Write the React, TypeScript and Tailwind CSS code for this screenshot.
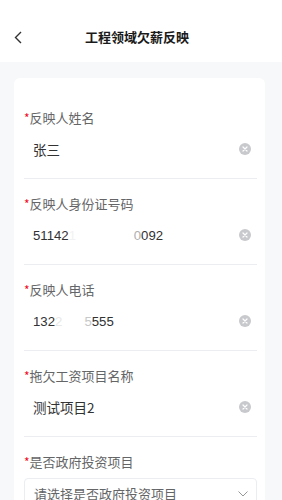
import React from "react";

const ClearIcon = () => (
  <svg width="12" height="12" viewBox="0 0 12 12" className="shrink-0">
    <circle cx="6" cy="6" r="6" fill="#c8c9cc" />
    <path d="M4 4 L8 8 M8 4 L4 8" stroke="#fff" strokeWidth="1.2" strokeLinecap="round" />
  </svg>
);

const Field = ({ label, children }: { label: string; children: React.ReactNode }) => (
  <div className="pt-[15px]">
    <div className="h-[20px] flex items-center text-[13px] text-[#646566] leading-[20px]">
      <span className="text-[#ee0a24] text-[12px]">*</span>
      <span>{label}</span>
    </div>
    <div className="h-[42px] flex items-center pl-[9px] pr-[6px] mb-[8px]">
      <div className="flex-1 text-[13.5px] text-[#323233] whitespace-nowrap">{children}</div>
      <ClearIcon />
    </div>
    <div className="h-px bg-[#ebedf0]" />
  </div>
);

export default function App() {
  return (
    <div
      className="w-[282px] h-[500px] overflow-hidden bg-[#f7f8fa]"
      style={{ fontFamily: '"Noto Sans CJK SC", "Noto Sans", sans-serif' }}
    >
      <div className="h-[62px] bg-white flex items-center pt-[12px] px-[14px]">
        <svg width="8" height="13" viewBox="0 0 8 13" className="shrink-0">
          <path d="M7 1 L1.5 6.5 L7 12" fill="none" stroke="#323233" strokeWidth="1.4" />
        </svg>
        <div className="ml-[63px] text-[13px] font-bold text-[#1a1a1a]">工程领域欠薪反映</div>
      </div>
      <div className="pl-[14px] pr-[17px] pt-[16px]">
        <div className="bg-white rounded-[6px] pl-[10px] pr-[8px] pt-[15px] pb-[20px]">
          <Field label="反映人姓名">张三</Field>
          <Field label="反映人身份证号码">
            <span className="text-[13.2px]" style={{ fontFamily: '"Liberation Sans", sans-serif' }}>
              51142<span className="text-[#f2f2f2]">1</span>
              <span className="text-white">19900101</span>
              <span className="text-[#b0b0b0]">0</span>092
            </span>
          </Field>
          <Field label="反映人电话">
            <span className="text-[13.2px]" style={{ fontFamily: '"Liberation Sans", sans-serif' }}>
              132<span className="text-[#e8e8e8]">2</span>
              <span className="text-white">888</span>
              <span className="text-[#c8c8c8]">5</span>555
            </span>
          </Field>
          <Field label="拖欠工资项目名称">测试项目2</Field>
          <div className="pt-[15px]">
            <div className="h-[20px] flex items-center text-[13px] text-[#646566] leading-[20px]">
              <span className="text-[#ee0a24] text-[12px]">*</span>
              <span>是否政府投资项目</span>
            </div>
            <div className="mt-[6px] h-[32px] border border-[#ebedf0] rounded-[4px] flex items-center pl-[9px] pr-[8px]">
              <div className="flex-1 text-[13px] text-[#646566]">请选择是否政府投资项目</div>
              <svg width="10" height="6" viewBox="0 0 10 6">
                <path d="M0.5 0.5 L5 5 L9.5 0.5" fill="none" stroke="#969799" strokeWidth="1" />
              </svg>
            </div>
          </div>
        </div>
      </div>
    </div>
  );
}
